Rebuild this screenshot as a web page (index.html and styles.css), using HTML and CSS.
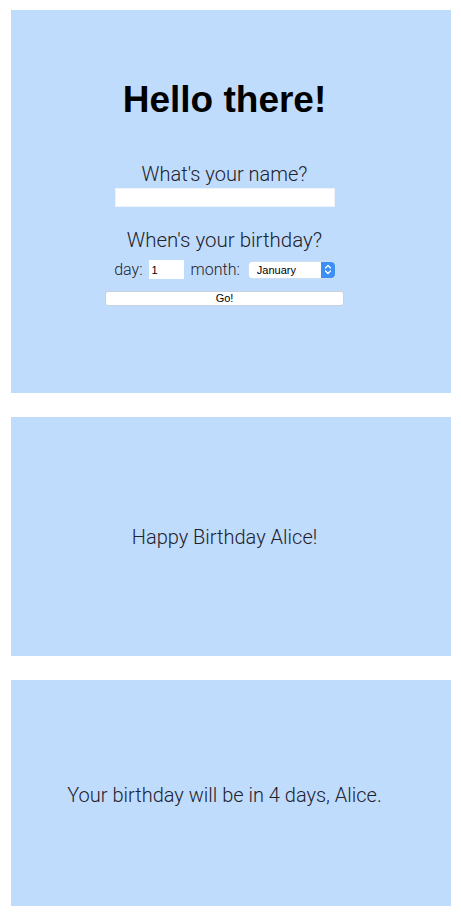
FILE: index.html
```html
<!DOCTYPE html>
<html lang="en">
<head>
<meta charset="utf-8">
<title>Birthday</title>
<link rel="stylesheet" href="styles.css">
</head>
<body>
<main class="page">
  <section class="panel panel-form">
    <h1 class="title">Hello there!</h1>
    <form class="form">
      <label class="question" for="name">What's your name?</label>
      <input class="name-input" id="name" type="text">
      <div class="question question-birthday">When's your birthday?</div>
      <div class="date-row">
        <span class="small-label">day:</span>
        <input class="day-input" type="text" value="1">
        <span class="small-label month-label">month:</span>
        <span class="select-wrap">
          <select class="month-select">
            <option>January</option>
            <option>February</option>
            <option>March</option>
            <option>April</option>
            <option>May</option>
            <option>June</option>
            <option>July</option>
            <option>August</option>
            <option>September</option>
            <option>October</option>
            <option>November</option>
            <option>December</option>
          </select>
          <span class="select-arrow">
            <svg width="8" height="11" viewBox="0 0 8 11" aria-hidden="true">
              <path d="M1.5 4 L4 1.5 L6.5 4 M1.5 7 L4 9.5 L6.5 7" fill="none" stroke="#fff" stroke-width="1.3" stroke-linecap="round" stroke-linejoin="round"/>
            </svg>
          </span>
        </span>
      </div>
      <button class="go-button" type="button">Go!</button>
    </form>
  </section>
  <section class="panel panel-msg panel-happy">
    <p class="message">Happy Birthday Alice!</p>
  </section>
  <section class="panel panel-msg panel-wait">
    <p class="message">Your birthday will be in 4 days, Alice.</p>
  </section>
</main>
</body>
</html>
```
FILE: styles.css
```css
html, body {
  margin: 0;
  padding: 0;
  background: #ffffff;
}

body {
  font-family: Roboto, "Liberation Sans", Arial, sans-serif;
  font-weight: 300;
  color: #22222c;
}

.page {
  display: flex;
  flex-direction: column;
  gap: 24px;
  padding: 10px 0 13px 11px;
  width: 440px;
}

.panel {
  background: #c0dcfd;
  box-sizing: border-box;
  width: 440px;
  padding-right: 13px;
}

.panel-form {
  height: 383px;
  padding-top: 68px;
  display: flex;
  flex-direction: column;
  align-items: center;
}

.title {
  margin: 0;
  font-family: "Liberation Sans", Arial, sans-serif;
  font-size: 37px;
  line-height: 43px;
  font-weight: bold;
  color: #000;
}

.form {
  display: flex;
  flex-direction: column;
  align-items: center;
  margin-top: 41px;
}

.question {
  font-size: 20px;
  line-height: 24px;
}

.question-birthday {
  font-size: 20.5px;
}

.name-input {
  margin-top: 2px;
  width: 220px;
  height: 19px;
  box-sizing: border-box;
  border: 1px solid #eef3f9;
  background: #fff;
  padding: 0 3px;
  outline: none;
}

.question-birthday {
  margin-top: 21px;
}

.date-row {
  margin-top: 8px;
  display: flex;
  align-items: center;
  height: 19px;
}

.small-label {
  font-size: 16px;
  line-height: 19px;
}

.day-input {
  margin-left: 6px;
  width: 35px;
  height: 19px;
  box-sizing: border-box;
  border: none;
  background: #fff;
  padding: 0 0 0 3px;
  font-family: "Liberation Sans", Arial, sans-serif;
  font-size: 11px;
  color: #000;
  outline: none;
}

.month-label {
  margin-left: 7px;
}

.select-wrap {
  margin-left: 9px;
  display: inline-flex;
  width: 86px;
  height: 16px;
  border-radius: 4px;
  overflow: hidden;
  background: #fff;
  box-shadow: 0 0 0 0.5px #d6dfea;
}

.month-select {
  -webkit-appearance: none;
  appearance: none;
  border: none;
  background: #fff;
  flex: 1;
  min-width: 0;
  height: 16px;
  padding: 0 0 0 8px;
  margin: 0;
  font-family: "Liberation Sans", Arial, sans-serif;
  font-size: 11px;
  line-height: 16px;
  color: #000;
  outline: none;
}

.select-arrow {
  width: 14px;
  height: 16px;
  background: #3d8ff6;
  display: flex;
  align-items: center;
  justify-content: center;
}

.go-button {
  margin-top: 12px;
  width: 239px;
  height: 15px;
  box-sizing: border-box;
  border: 1px solid #c9d2dc;
  border-radius: 3px;
  background: #fff;
  padding: 0;
  font-family: "Liberation Sans", Arial, sans-serif;
  font-size: 11px;
  line-height: 13px;
  color: #000;
}

.panel-msg {
  display: flex;
  align-items: center;
  justify-content: center;
}

.panel-happy {
  height: 239px;
}

.panel-wait {
  height: 226px;
}

.message {
  margin: 0;
  font-size: 20px;
  line-height: 24px;
}

.panel-wait .message {
  margin-top: 3px;
}
```
